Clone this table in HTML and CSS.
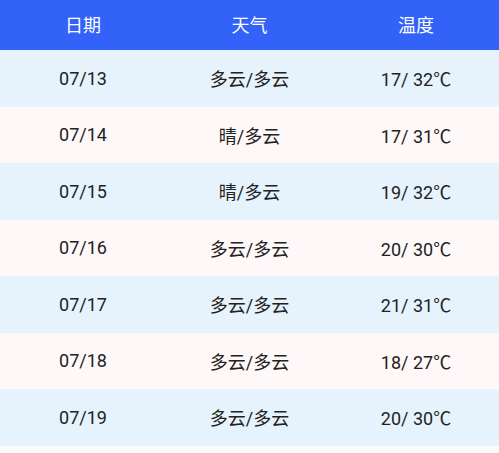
FILE: index.html
```html
<!DOCTYPE html>
<html lang="zh">
<head>
<meta charset="utf-8">
<link rel="stylesheet" href="styles.css">
</head>
<body>
<div class="table">
  <div class="row head"><div>日期</div><div>天气</div><div>温度</div></div>
  <div class="row blue"><div>07/13</div><div>多云/多云</div><div>17/ 32℃</div></div>
  <div class="row pink"><div>07/14</div><div>晴/多云</div><div>17/ 31℃</div></div>
  <div class="row blue"><div>07/15</div><div>晴/多云</div><div>19/ 32℃</div></div>
  <div class="row pink"><div>07/16</div><div>多云/多云</div><div>20/ 30℃</div></div>
  <div class="row blue"><div>07/17</div><div>多云/多云</div><div>21/ 31℃</div></div>
  <div class="row pink"><div>07/18</div><div>多云/多云</div><div>18/ 27℃</div></div>
  <div class="row blue"><div>07/19</div><div>多云/多云</div><div>20/ 30℃</div></div>
</div>
</body>
</html>
```
FILE: styles.css
```css
html, body {
  margin: 0;
  padding: 0;
  background: #fbfcfe;
}
body {
  width: 499px;
  height: 453px;
  overflow: hidden;
  font-family: Roboto, "Noto Sans CJK SC", sans-serif;
  font-size: 18px;
  color: #222;
}
.row {
  display: grid;
  grid-template-columns: 166px 167px 166px;
  height: 56.5px;
  align-items: center;
  text-align: center;
}
.row.head {
  height: 50px;
  background: #3262f7;
  color: #fff;
  padding-bottom: 3px;
  box-sizing: border-box;
}
.row.blue { background: #e6f3fc; }
.row.pink { background: #fff8f8; }
```
